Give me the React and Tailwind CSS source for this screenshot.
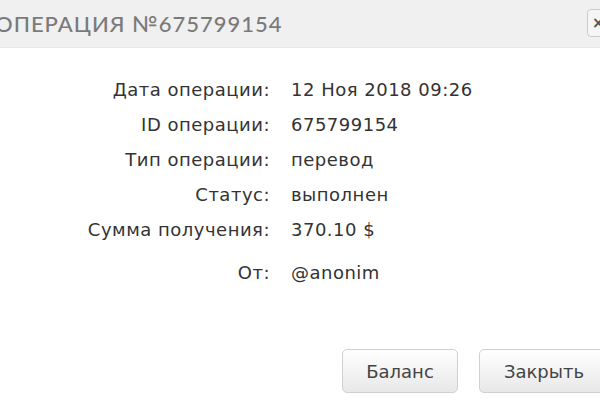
import React from "react";

const rows = [
  ["Дата операции:", "12 Ноя 2018 09:26"],
  ["ID операции:", "675799154"],
  ["Тип операции:", "перевод"],
  ["Статус:", "выполнен"],
  ["Сумма получения:", "370.10 $"],
];

function Row({ label, value }) {
  return (
    <>
      <div className="text-right h-[35px] flex items-center justify-end whitespace-nowrap">{label}</div>
      <div className="h-[35px] flex items-center whitespace-nowrap">{value}</div>
    </>
  );
}

export default function App() {
  return (
    <div className="w-[600px] h-[400px] bg-white overflow-hidden relative font-['DejaVu_Sans',sans-serif] text-[#333]">
      {/* Header */}
      <div className="h-[48px] bg-[#f0f0f0] flex items-center border-b border-[#e8e8e8]">
        <span className="-ml-[5px] text-[22px] tracking-[1px] text-[#7a7a7a] font-['Lato',sans-serif] font-medium whitespace-nowrap">
          ОПЕРАЦИЯ №675799154
        </span>
      </div>
      <button className="absolute left-[587px] top-[9px] w-[28px] h-[28px] rounded-[4px] border border-[#ccc] bg-[#f5f5f5] flex items-center pl-[4px] text-[#555] text-[15px] font-bold">
        ×
      </button>

      {/* Details */}
      <div className="grid grid-cols-[270px_1fr] gap-x-[21px] pt-[24px] text-[18px] tracking-[0.5px]">
        {rows.map(([l, v]) => (
          <Row key={l} label={l} value={v} />
        ))}
        <div className="h-[8px] col-span-2" />
        <Row label="От:" value="@anonim" />
      </div>

      {/* Buttons */}
      <div className="flex gap-[21px] pl-[342px] pt-[59px]">
        <button className="w-[116px] h-[44px] rounded-[5px] border border-[#d0d0d0] bg-gradient-to-b from-white to-[#e8e8e8] text-[18px] text-[#444] shrink-0">
          Баланс
        </button>
        <button className="w-[130px] h-[44px] rounded-[5px] border border-[#d0d0d0] bg-gradient-to-b from-white to-[#e8e8e8] text-[18px] text-[#444] shrink-0">
          Закрыть
        </button>
      </div>
    </div>
  );
}
